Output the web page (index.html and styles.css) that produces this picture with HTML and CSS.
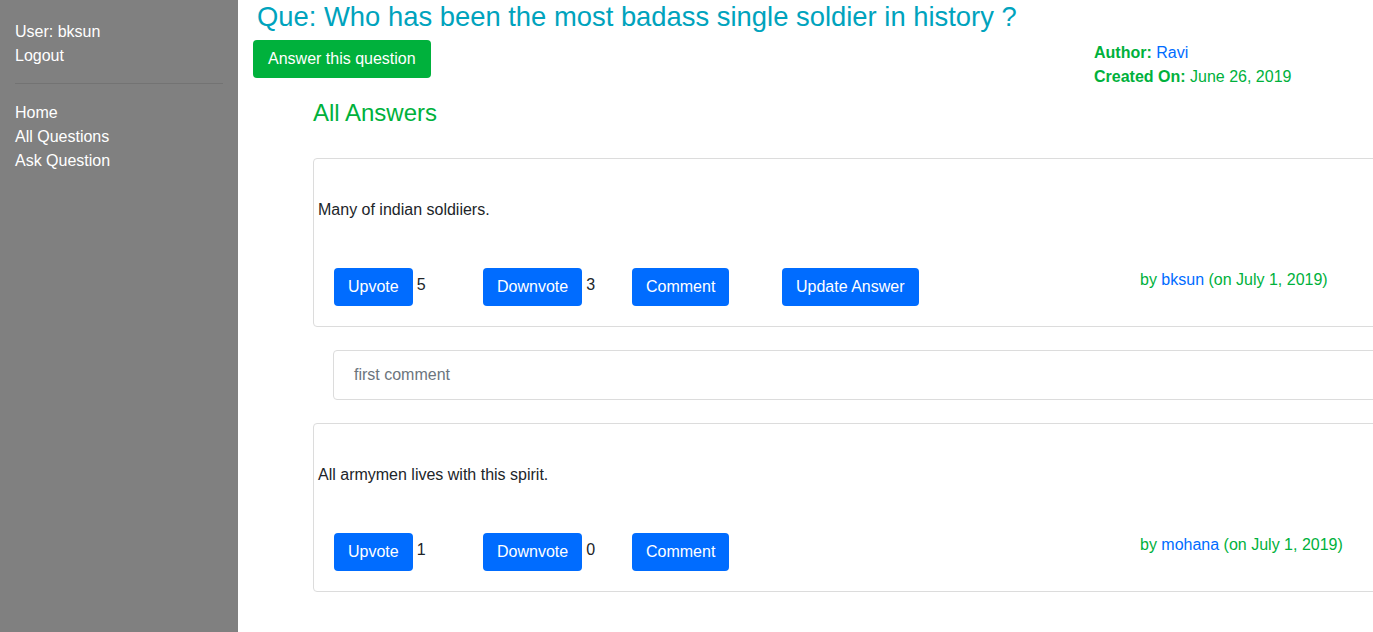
FILE: index.html
```html
<!DOCTYPE html>
<html lang="en">
<head>
<meta charset="utf-8">
<title>Question</title>
<link rel="stylesheet" href="styles.css">
</head>
<body>
<div class="page">
  <aside class="sidebar">
    <div class="nav-line">User: bksun</div>
    <a class="nav-link" href="#">Logout</a>
    <hr class="divider">
    <a class="nav-link" href="#">Home</a>
    <a class="nav-link" href="#">All Questions</a>
    <a class="nav-link" href="#">Ask Question</a>
  </aside>
  <main class="main">
    <h3 class="question-title">Que: Who has been the most badass single soldier in history ?</h3>
    <div class="header-row">
      <button class="btn btn-success">Answer this question</button>
      <div class="meta">
        <div><b>Author:</b> <a class="link" href="#">Ravi</a></div>
        <div><b>Created On:</b> June 26, 2019</div>
      </div>
    </div>
    <section class="answers">
      <h4 class="answers-title">All Answers</h4>

      <div class="answer-card">
        <p class="answer-text">Many of indian soldiiers.</p>
        <div class="actions">
          <div class="action"><button class="btn btn-primary">Upvote</button><span class="count">5</span></div>
          <div class="action"><button class="btn btn-primary">Downvote</button><span class="count">3</span></div>
          <div class="action"><button class="btn btn-primary">Comment</button></div>
          <div class="action"><button class="btn btn-primary">Update Answer</button></div>
          <div class="byline">by <a class="link" href="#">bksun</a> (on July 1, 2019)</div>
        </div>
      </div>

      <div class="comment">first comment</div>

      <div class="answer-card">
        <p class="answer-text">All armymen lives with this spirit.</p>
        <div class="actions">
          <div class="action"><button class="btn btn-primary">Upvote</button><span class="count">1</span></div>
          <div class="action"><button class="btn btn-primary">Downvote</button><span class="count">0</span></div>
          <div class="action"><button class="btn btn-primary">Comment</button></div>
          <div class="action"></div>
          <div class="byline">by <a class="link" href="#">mohana</a> (on July 1, 2019)</div>
        </div>
      </div>
    </section>
  </main>
</div>
</body>
</html>
```

FILE: styles.css
```css
* { box-sizing: border-box; }
html, body {
  margin: 0;
  padding: 0;
  height: 100%;
  overflow: hidden;
}
body {
  font-family: "Liberation Sans", Arial, sans-serif;
  font-size: 16px;
  line-height: 1.5;
  color: #212529;
  background: #fff;
}
.page {
  display: flex;
  height: 632px;
}
.sidebar {
  width: 238px;
  flex: 0 0 238px;
  background: #808080;
  padding: 20px 15px 0 15px;
  display: flex;
  flex-direction: column;
  color: #fff;
}
.nav-line, .nav-link {
  color: #fff;
  text-decoration: none;
  display: block;
}
.divider {
  border: 0;
  border-top: 1px solid #737373;
  margin: 15px 0 17px 0;
  width: 100%;
}
.main {
  flex: 1;
  min-width: 0;
  padding-left: 15px;
}
.question-title {
  margin: 1px 0 6px 4px;
  font-size: 27.4px;
  font-weight: 500;
  line-height: 1.2;
  color: #00a3bd;
}
.header-row {
  display: flex;
  justify-content: space-between;
  align-items: flex-start;
}
.meta {
  width: 279px;
  margin-top: 1px;
  margin-bottom: -11px;
  color: #00b13c;
}
.meta b { font-weight: 700; }
.link { color: #006cff; text-decoration: none; }
.btn {
  font-family: inherit;
  font-size: 16px;
  line-height: 24px;
  padding: 7px 14px;
  border: 0;
  border-radius: 4px;
  color: #fff;
  cursor: pointer;
}
.btn-success { background: #00b13c; padding-left: 15px; padding-right: 15px; }
.btn-primary { background: #006cff; }
.answers {
  margin-left: 60px;
  margin-right: -40px;
}
.answers-title {
  margin: 21px 0 30px 0;
  font-size: 24px;
  font-weight: 500;
  line-height: 1.2;
  color: #00b13c;
}
.answer-card {
  border: 1px solid #dcdcdc;
  border-radius: 4px;
  padding: 39px 0 20px 4px;
}
.answer-text {
  margin: 0 0 46px 0;
}
.actions {
  display: grid;
  grid-template-columns: 149px 149px 150px 358px auto;
  padding-left: 16px;
  align-items: start;
}
.action {
  display: flex;
  align-items: flex-start;
}
.count {
  margin-left: 4px;
  line-height: 34px;
}
.byline {
  color: #00b13c;
}
.comment {
  margin: 23px 0 23px 20px;
  border: 1px solid #dcdcdc;
  border-radius: 4px;
  height: 50px;
  padding: 12px 20px;
  color: #6c757d;
}
```
